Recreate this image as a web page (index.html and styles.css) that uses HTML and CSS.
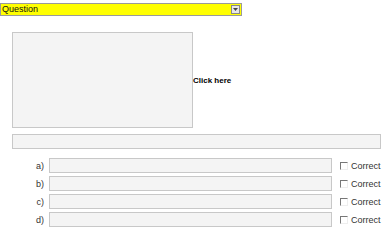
FILE: index.html
```html
<!DOCTYPE html>
<html>
<head>
<meta charset="utf-8">
<link rel="stylesheet" href="styles.css">
</head>
<body>
<div class="page">
  <div class="select">
    <span class="select-text">Question</span>
    <span class="select-btn"><svg width="5" height="3" viewBox="0 0 5 3"><path d="M0 0h5L2.5 3z" fill="#444"/></svg></span>
  </div>
  <div class="media">
    <div class="imgbox"></div>
    <span class="click">Click here</span>
  </div>
  <div class="wide-input"></div>
  <div class="answers">
    <span class="lbl">a)</span><div class="ans-input"></div><label class="correct"><span class="cb"></span>Correct</label>
    <span class="lbl">b)</span><div class="ans-input"></div><label class="correct"><span class="cb"></span>Correct</label>
    <span class="lbl">c)</span><div class="ans-input"></div><label class="correct"><span class="cb"></span>Correct</label>
    <span class="lbl">d)</span><div class="ans-input"></div><label class="correct"><span class="cb"></span>Correct</label>
  </div>
</div>
</body>
</html>
```
FILE: styles.css
```css
html, body { margin: 0; padding: 0; background: #fff; }
body { font-family: "Liberation Sans", Arial, sans-serif; font-size: 9px; color: #222; }
.page { padding-top: 3px; }
.select {
  width: 240px; height: 11px; border: 1px solid #9a9a9a; background: #ffff00;
  display: flex; align-items: center; justify-content: space-between;
}
.select-text { padding-left: 1px; line-height: 11px; color: #111; }
.select-btn {
  width: 7px; height: 7px; margin-right: 1px; border: 1px solid #888; background: #e8e8e8;
  display: flex; align-items: center; justify-content: center;
}
.media { display: flex; align-items: center; margin: 16px 0 0 12px; }
.imgbox { width: 179px; height: 94px; border: 1px solid #c8c8c8; background: #f4f4f4; }
.click { font-weight: bold; font-size: 8px; color: #000; }
.wide-input { margin: 6px 0 0 12px; width: 367px; height: 13px; border: 1px solid #c8c8c8; background: #f4f4f4; }
.answers {
  display: grid; grid-template-columns: 49px 283px auto; row-gap: 3px; align-items: center;
  margin-top: 9px;
}
.lbl { text-align: right; padding-right: 5px; color: #333; }
.ans-input { height: 13px; border: 1px solid #c8c8c8; background: #f4f4f4; }
.correct { display: flex; align-items: center; margin-left: 8px; color: #333; }
.cb {
  width: 6px; height: 6px; margin-right: 3px;
  border-top: 1px solid #777; border-left: 1px solid #777;
  border-right: 1px solid #eee; border-bottom: 1px solid #eee; background: #fff;
}
```
